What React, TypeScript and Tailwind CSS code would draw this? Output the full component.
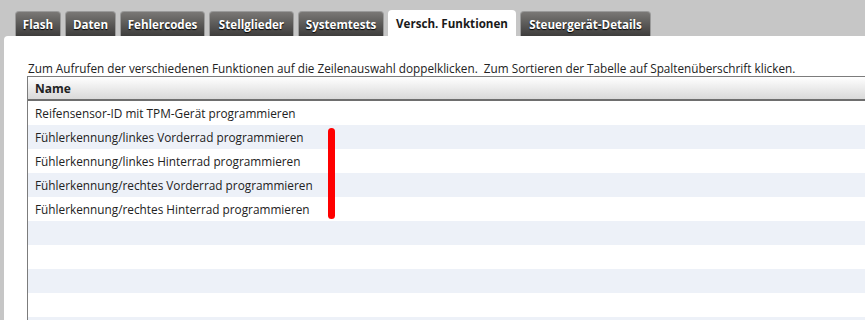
import type { ReactNode } from "react";

const TABS: { label: string; w: string }[] = [
  { label: "Flash", w: "w-[46px]" },
  { label: "Daten", w: "w-[51px]" },
  { label: "Fehlercodes", w: "w-[85px]" },
  { label: "Stellglieder", w: "w-[85px]" },
  { label: "Systemtests", w: "w-[86px]" },
  { label: "Versch. Funktionen", w: "w-[128px]" },
  { label: "Steuergerät-Details", w: "w-[131px]" },
];

const ACTIVE = "Versch. Funktionen";

const ROWS = [
  "Reifensensor-ID mit TPM-Gerät programmieren",
  "Fühlerkennung/linkes Vorderrad programmieren",
  "Fühlerkennung/linkes Hinterrad programmieren",
  "Fühlerkennung/rechtes Vorderrad programmieren",
  "Fühlerkennung/rechtes Hinterrad programmieren",
  "",
  "",
  "",
  "",
  "",
];

function Tab({ label, w, active }: { label: string; w: string; active: boolean }) {
  return (
    <div
      className={`${w} shrink-0 text-center whitespace-nowrap ${
        active
          ? "h-[26px] rounded-t-[4px] bg-white pt-[6px] text-[11.6px] font-bold leading-[16px] text-[#1a1a1a]"
          : "h-[25px] rounded-t-[4px] border border-b-0 border-[#9a9a9a] bg-gradient-to-b from-[#7a7876] to-[#3e3d3c] pt-[5px] text-[11.6px] font-bold leading-[16px] text-white [text-shadow:0_1px_1px_#000]"
      }`}
    >
      {label}
    </div>
  );
}

function Row({ children, striped }: { children: ReactNode; striped: boolean }) {
  return (
    <div
      className={`h-[24px] pl-[7px] pt-[3px] text-[11.8px] leading-[18px] text-[#222] ${
        striped ? "bg-[#edf1f8]" : "bg-white"
      }`}
    >
      {children}
    </div>
  );
}

export default function App() {
  return (
    <div className="h-[320px] w-[865px] overflow-hidden bg-[#c6c6c6] pt-[10px] font-['Open_Sans',sans-serif]">
      <div className="flex items-end gap-[4px] pl-[15px]">
        {TABS.map((t) => (
          <Tab key={t.label} label={t.label} w={t.w} active={t.label === ACTIVE} />
        ))}
      </div>
      <div className="ml-[4px] h-[300px] rounded-tl-[4px] bg-white pl-[23px] pt-[24px]">
        <p className="pl-[1px] text-[11.75px] leading-[16px] text-[#222] whitespace-pre">
          {"Zum Aufrufen der verschiedenen Funktionen auf die Zeilenauswahl doppelklicken.  Zum Sortieren der Tabelle auf Spaltenüberschrift klicken."}
        </p>
        <div className="relative border-l border-t border-[#7c7c7c]">
          <div className="h-[24px] border-b-2 border-[#6e6e6e] bg-gradient-to-b from-white to-[#d9d9d9] pl-[7px] pt-[3px] text-[12px] font-bold leading-[18px] text-[#222]">
            Name
          </div>
          {ROWS.map((r, i) => (
            <Row key={i} striped={i % 2 === 1}>
              {r}
            </Row>
          ))}
          <div className="absolute left-[300px] top-[51px] h-[91px] w-[7px] rounded-full bg-[#ff0000]" />
        </div>
      </div>
    </div>
  );
}
